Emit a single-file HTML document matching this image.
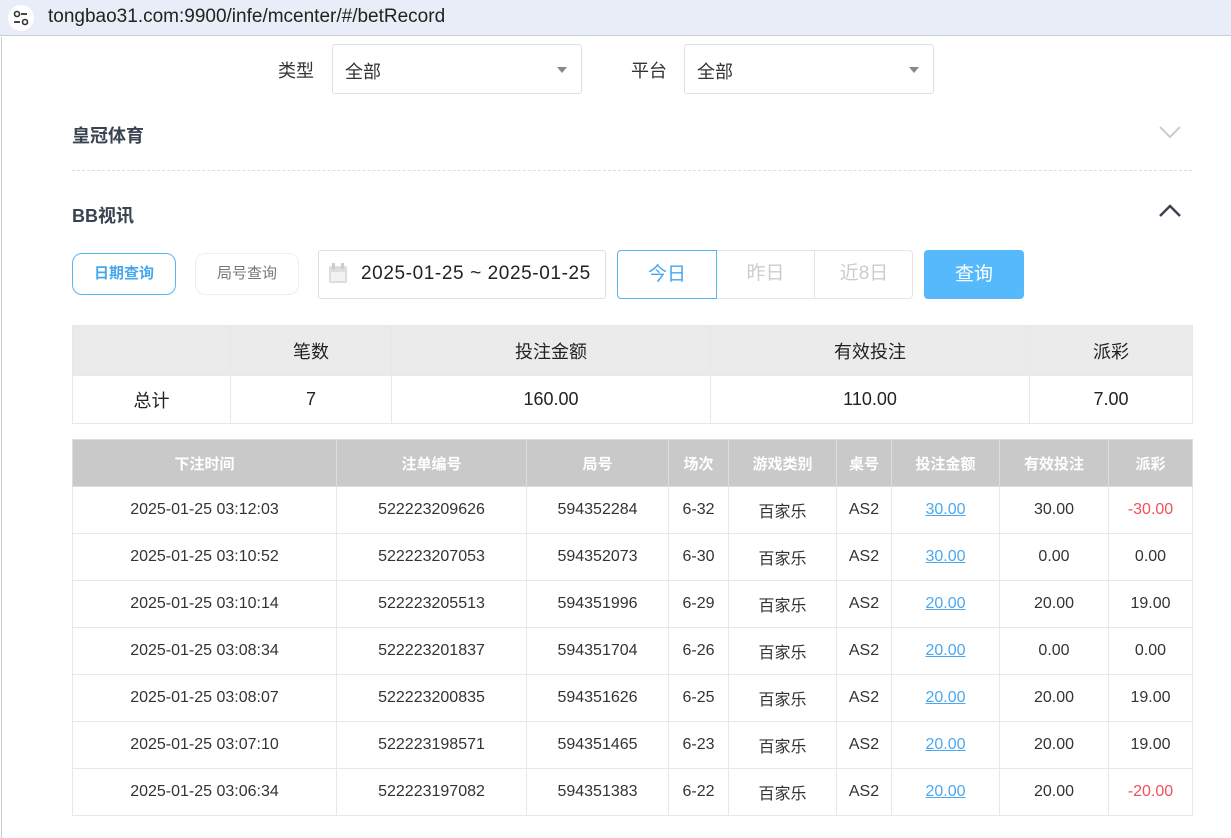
<!DOCTYPE html>
<html><head><meta charset="utf-8"><style>
*{box-sizing:border-box;margin:0;padding:0}
body{width:1231px;height:838px;overflow:hidden;background:#fff;font-family:"Liberation Sans","Noto Sans CJK SC",sans-serif;position:relative;color:#333}
.abs{position:absolute}
.bar{left:0;top:0;width:1231px;height:36px;background:#e9edf7;border-bottom:1px solid #c9ccd3}
.url{left:48px;top:6px;font-size:19px;color:#222}
.ico{left:8px;top:5px;width:26px;height:26px;border-radius:13px;background:#fff}
.lbl{font-size:18px;color:#333}
.sel{border:1px solid #dcdfe6;border-radius:3px;height:50px;font-size:18px;color:#333;padding:13px 12px}
.sel:after{content:"";position:absolute;right:14px;top:22px;border:5px solid transparent;border-top:6px solid #888}
.h{font-size:18px;font-weight:bold;color:#3a4350;left:72px}
.btn{border-radius:10px;font-size:15px;text-align:center}
table{border-collapse:collapse;position:absolute;table-layout:fixed}
td{text-align:center;border:1px solid #e8e8e8}
.sum td{font-size:18px;color:#222}
.det td{font-size:16px;color:#333;height:47px}
.det tr:first-child td{background:#c9c9c9;color:#fff;font-weight:bold;border-color:#ddd;font-size:15px}
.det td.lk{color:#4aa8f0;text-decoration:underline}
.det td.rd{color:#f0505a}
</style></head><body>
<div class="abs bar"></div>
<div class="abs ico"><svg width="26" height="26"><circle cx="9" cy="9" r="2.5" fill="none" stroke="#333" stroke-width="1.6"/><line x1="13" y1="9" x2="19" y2="9" stroke="#333" stroke-width="1.8"/><line x1="6" y1="17" x2="12" y2="17" stroke="#333" stroke-width="1.8"/><circle cx="17" cy="17" r="2.5" fill="none" stroke="#333" stroke-width="1.6"/></svg></div>
<div class="abs url">tongbao31.com:9900/infe/mcenter/#/betRecord</div>
<div class="abs" style="left:1px;top:37px;width:1px;height:801px;background:#c8cad6"></div>

<div class="abs lbl" style="left:278px;top:57px">类型</div>
<div class="abs sel" style="left:332px;top:44px;width:250px">全部</div>
<div class="abs lbl" style="left:631px;top:57px">平台</div>
<div class="abs sel" style="left:684px;top:44px;width:250px">全部</div>

<div class="abs h" style="top:122px">皇冠体育</div>
<svg class="abs" style="left:1158px;top:124px" width="24" height="16"><polyline points="2,3 12,13 22,3" fill="none" stroke="#ccc" stroke-width="2"/></svg>
<div class="abs" style="left:72px;top:170px;width:1120px;border-top:1px dashed #ddd"></div>
<div class="abs h" style="top:202px">BB视讯</div>
<svg class="abs" style="left:1158px;top:203px" width="24" height="16"><polyline points="2,13 12,3 22,13" fill="none" stroke="#3a4350" stroke-width="2.5"/></svg>

<div class="abs btn" style="left:72px;top:253px;width:104px;height:42px;border:1px solid #55b6f5;color:#46a7ee;font-weight:bold;line-height:40px">日期查询</div>
<div class="abs btn" style="left:195px;top:253px;width:104px;height:42px;border:1px solid #eee;color:#777;line-height:40px">局号查询</div>
<div class="abs" style="left:318px;top:250px;width:288px;height:49px;border:1px solid #dcdfe6;border-radius:3px"></div>
<svg class="abs" style="left:328px;top:263px" width="22" height="22"><rect x="1" y="3" width="18" height="17" rx="2" fill="#ddd"/><rect x="4" y="0" width="3" height="6" fill="#ccc"/><rect x="13" y="0" width="3" height="6" fill="#ccc"/><rect x="3" y="9" width="14" height="9" fill="#f2f2f2"/></svg>
<div class="abs" style="left:361px;top:263px;font-size:19px;color:#222;letter-spacing:0.6px">2025-01-25 ~ 2025-01-25</div>
<div class="abs" style="left:617px;top:250px;width:296px;height:49px;border:1px solid #e4e4e4;border-radius:4px"></div>
<div class="abs" style="left:617px;top:250px;width:100px;height:49px;border:1px solid #55b6f5;border-radius:4px 0 0 4px;color:#46a7ee;font-size:19px;text-align:center;line-height:47px">今日</div>
<div class="abs" style="left:717px;top:250px;width:98px;height:49px;color:#ccc;font-size:19px;text-align:center;line-height:47px;border-right:1px solid #e4e4e4">昨日</div>
<div class="abs" style="left:815px;top:250px;width:98px;height:49px;color:#ccc;font-size:19px;text-align:center;line-height:47px">近8日</div>
<div class="abs" style="left:924px;top:250px;width:100px;height:49px;background:#56b9fb;border-radius:4px;color:#fff;font-size:19px;text-align:center;line-height:49px">查询</div>

<table class="sum" style="left:72px;top:325px;width:1120px">
<colgroup><col style="width:158px"><col style="width:161px"><col style="width:319px"><col style="width:319px"><col style="width:163px"></colgroup>
<tr style="background:#ebebeb;height:50px"><td></td><td>笔数</td><td>投注金额</td><td>有效投注</td><td>派彩</td></tr>
<tr style="height:48px"><td>总计</td><td>7</td><td>160.00</td><td>110.00</td><td>7.00</td></tr>
</table>

<table class="det" style="left:72px;top:439px;width:1120px">
<colgroup><col style="width:264px"><col style="width:190px"><col style="width:142px"><col style="width:60px"><col style="width:108px"><col style="width:55px"><col style="width:108px"><col style="width:109px"><col style="width:84px"></colgroup>
<tr><td>下注时间</td><td>注单编号</td><td>局号</td><td>场次</td><td>游戏类别</td><td>桌号</td><td>投注金额</td><td>有效投注</td><td>派彩</td></tr>
<tr><td>2025-01-25 03:12:03</td><td>522223209626</td><td>594352284</td><td>6-32</td><td>百家乐</td><td>AS2</td><td class="lk">30.00</td><td>30.00</td><td class="rd">-30.00</td></tr>
<tr><td>2025-01-25 03:10:52</td><td>522223207053</td><td>594352073</td><td>6-30</td><td>百家乐</td><td>AS2</td><td class="lk">30.00</td><td>0.00</td><td>0.00</td></tr>
<tr><td>2025-01-25 03:10:14</td><td>522223205513</td><td>594351996</td><td>6-29</td><td>百家乐</td><td>AS2</td><td class="lk">20.00</td><td>20.00</td><td>19.00</td></tr>
<tr><td>2025-01-25 03:08:34</td><td>522223201837</td><td>594351704</td><td>6-26</td><td>百家乐</td><td>AS2</td><td class="lk">20.00</td><td>0.00</td><td>0.00</td></tr>
<tr><td>2025-01-25 03:08:07</td><td>522223200835</td><td>594351626</td><td>6-25</td><td>百家乐</td><td>AS2</td><td class="lk">20.00</td><td>20.00</td><td>19.00</td></tr>
<tr><td>2025-01-25 03:07:10</td><td>522223198571</td><td>594351465</td><td>6-23</td><td>百家乐</td><td>AS2</td><td class="lk">20.00</td><td>20.00</td><td>19.00</td></tr>
<tr><td>2025-01-25 03:06:34</td><td>522223197082</td><td>594351383</td><td>6-22</td><td>百家乐</td><td>AS2</td><td class="lk">20.00</td><td>20.00</td><td class="rd">-20.00</td></tr>
</table>
</body></html>
